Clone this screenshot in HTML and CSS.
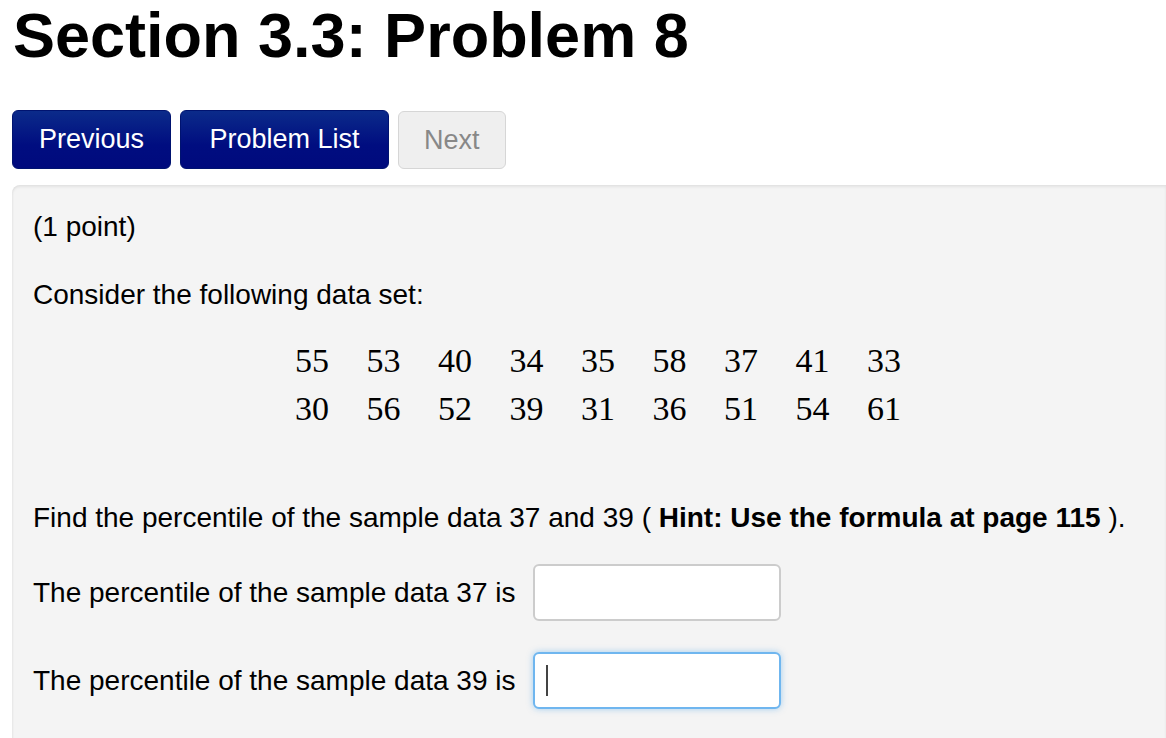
FILE: index.html
```html
<!DOCTYPE html>
<html>

<head>
    <link rel="stylesheet" href="styles.css">
    <title>Section 3.3: Problem 8</title>
</head>

<body>
    <div id="page-wrapper">
        <h1 class="problem-title">Section 3.3: Problem 8</h1>
        <div class="nav-buttons">
            <a class="btn btn-primary" href="#">Previous</a>
            <a class="btn btn-primary btn-wide" href="#">Problem List</a>
            <span class="btn btn-disabled">Next</span>
        </div>
        <div class="problem-body">
            <p class="points">(1 point)</p>
            <p>Consider the following data set:</p>
            <table class="data-set">
                <tr>
                    <td>55</td><td>53</td><td>40</td><td>34</td><td>35</td><td>58</td><td>37</td><td>41</td><td>33</td>
                </tr>
                <tr>
                    <td>30</td><td>56</td><td>52</td><td>39</td><td>31</td><td>36</td><td>51</td><td>54</td><td>61</td>
                </tr>
            </table>
            <p class="question">Find the percentile of the sample data 37 and 39 ( <b>Hint: Use the formula at page 115</b> ).</p>
            <div class="answer-row">
                <label for="ans1">The percentile of the sample data 37 is</label>
                <input id="ans1" class="answer" type="text">
            </div>
            <div class="answer-row">
                <label for="ans2">The percentile of the sample data 39 is</label>
                <span class="answer-wrap">
                    <input id="ans2" class="answer focused" type="text">
                    <span class="caret"></span>
                </span>
            </div>
        </div>
    </div>
</body>

</html>
```

FILE: styles.css
```css
html {
    font-family: Helvetica, "Liberation Sans", Arial, sans-serif;
    background: #FFFFFF;
    -webkit-font-smoothing: antialiased;
}

body {
    margin: 0;
}

#page-wrapper {
    padding: 0 0 0 12px;
}

.problem-title {
    font-size: 63px;
    font-weight: bold;
    line-height: 70px;
    margin: 0;
    padding: 0 0 0 1px;
    color: #000;
}

.nav-buttons {
    display: flex;
    gap: 9px;
    margin-top: 40px;
}

.btn {
    display: inline-block;
    font-size: 27px;
    line-height: 57px;
    padding: 0 26px;
    border-radius: 6px;
    text-decoration: none;
    border: 1px solid transparent;
}

.btn-wide {
    padding: 0 28.5px;
}

.btn-primary {
    color: #FFFFFF;
    background: linear-gradient(#0b2b8a, #000d80 60%, #000a7d);
    border-color: #001370;
}

.btn-disabled {
    color: #888888;
    background: #EFEFEF;
    border-color: #D6D6D6;
    line-height: 56px;
    margin-top: 1px;
    padding: 0 25px;
}

.problem-body {
    margin-top: 16px;
    background: #F4F4F4;
    border-radius: 8px 0 0 0;
    box-shadow: inset 0 2px 3px rgba(0, 0, 0, 0.07), inset 1px 0 2px rgba(0, 0, 0, 0.03);
    padding: 22px 20px 40px 21px;
    font-size: 28px;
    color: #000;
}

.problem-body p {
    margin: 0;
    line-height: 40px;
}

.problem-body p.points {
    margin-bottom: 28px;
}

table.data-set {
    border-collapse: collapse;
    margin: 22px 0 0 262px;
    font-family: "Liberation Serif", "Times New Roman", serif;
    font-size: 34px;
}

table.data-set td {
    padding: 0 37.5px 0 0;
    line-height: 48px;
}

table.data-set td:last-child {
    padding-right: 0;
}

.problem-body p.question {
    margin-top: 65px;
}

.answer-row {
    display: flex;
    align-items: center;
    gap: 17px;
    margin-top: 26px;
}

.answer-row + .answer-row {
    margin-top: 31px;
}

.answer-wrap {
    position: relative;
    display: block;
}

.answer {
    display: block;
    width: 248px;
    height: 57px;
    box-sizing: border-box;
    border: 2px solid #CCCCCC;
    border-radius: 6px;
    background: #FFFFFF;
    font-size: 28px;
    padding: 0 12px;
    outline: none;
}

.answer.focused {
    border-color: #6FB6EF;
    box-shadow: 0 0 6px rgba(82, 168, 236, 0.5);
}

.caret {
    position: absolute;
    left: 13px;
    top: 13px;
    width: 2px;
    height: 31px;
    background: #444;
}
```
